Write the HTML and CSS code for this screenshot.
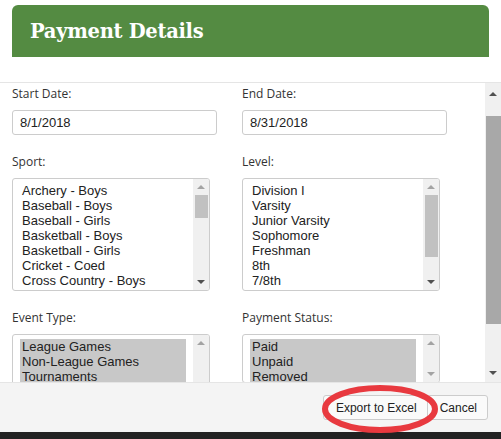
FILE: index.html
```html
<!DOCTYPE html>
<html lang="en">
<head>
  <meta charset="UTF-8">
  <meta name="viewport" content="width=device-width, initial-scale=1.0">
  <title>Payment Details</title>
  <link rel="stylesheet" href="styles.css">
</head>
<body>
  <div class="modal-header">
    <h1>Payment Details</h1>
  </div>

  <div class="modal-body">
    <div class="form-area">
      <div class="form-grid">
        <div class="field">
          <label>Start Date:</label>
          <div class="input-box">8/1/2018</div>
        </div>
        <div class="field">
          <label>End Date:</label>
          <div class="input-box">8/31/2018</div>
        </div>

        <div class="field">
          <label>Sport:</label>
          <div class="listbox">
            <ul>
              <li>Archery - Boys</li>
              <li>Baseball - Boys</li>
              <li>Baseball - Girls</li>
              <li>Basketball - Boys</li>
              <li>Basketball - Girls</li>
              <li>Cricket - Coed</li>
              <li>Cross Country - Boys</li>
              <li>Cross Country - Girls</li>
            </ul>
            <div class="mini-scroll">
              <span class="arrow up"></span>
              <span class="thumb thumb-sport"></span>
              <span class="arrow down dark"></span>
            </div>
          </div>
        </div>
        <div class="field">
          <label>Level:</label>
          <div class="listbox">
            <ul>
              <li>Division I</li>
              <li>Varsity</li>
              <li>Junior Varsity</li>
              <li>Sophomore</li>
              <li>Freshman</li>
              <li>8th</li>
              <li>7/8th</li>
              <li>6/7/8th</li>
            </ul>
            <div class="mini-scroll">
              <span class="arrow up"></span>
              <span class="thumb thumb-level"></span>
              <span class="arrow down dark"></span>
            </div>
          </div>
        </div>

        <div class="field">
          <label>Event Type:</label>
          <div class="listbox tall">
            <ul>
              <li class="selected">League Games</li>
              <li class="selected">Non-League Games</li>
              <li class="selected">Tournaments</li>
              <li class="selected">Scrimmages</li>
            </ul>
            <div class="mini-scroll">
              <span class="arrow up"></span>
            </div>
          </div>
        </div>
        <div class="field">
          <label>Payment Status:</label>
          <div class="listbox short">
            <ul>
              <li class="selected">Paid</li>
              <li class="selected">Unpaid</li>
              <li class="selected">Removed</li>
            </ul>
            <div class="mini-scroll">
              <span class="arrow up"></span>
              <span class="arrow down"></span>
            </div>
          </div>
        </div>
      </div>
    </div>

    <div class="page-scroll">
      <span class="arrow up dark"></span>
      <span class="page-thumb"></span>
      <span class="arrow down dark"></span>
    </div>
  </div>

  <div class="modal-footer">
    <button class="btn">Export to Excel</button>
    <button class="btn">Cancel</button>
    <svg class="circle-mark" width="130" height="56" viewBox="0 0 130 56">
      <ellipse cx="65" cy="28" rx="55" ry="21" fill="none" stroke="#e8393f" stroke-width="6"/>
    </svg>
  </div>

  <div class="backdrop"></div>
</body>
</html>
```

FILE: styles.css
```css
body {
  margin: 0;
  background: #fff;
  font-family: 'Open Sans', Arial, sans-serif;
  color: #333;
  overflow: hidden;
}

.modal-header {
  margin: 5px 12px 0;
  height: 52px;
  background-color: #548b42;
  border-radius: 6px 6px 0 0;
  display: flex;
  align-items: center;
  padding-left: 18px;
}

.modal-header h1 {
  margin: 0;
  font-family: 'DejaVu Serif', serif;
  font-size: 19.5px;
  font-weight: bold;
  letter-spacing: -0.3px;
  color: #fff;
}

.modal-body {
  margin-top: 25px;
  height: 299px;
  border-top: 1px solid #e5e5e5;
  display: flex;
  overflow: hidden;
}

.form-area {
  flex: 1;
  padding: 2px 0 0 12px;
  overflow: hidden;
}

.form-grid {
  display: grid;
  grid-template-columns: 205px 205px;
  column-gap: 25px;
  row-gap: 18px;
}

.field label {
  display: block;
  font-size: 12px;
  line-height: 18px;
  margin-bottom: 7px;
  color: #333;
}

.input-box {
  height: 23px;
  border: 1px solid #ccc;
  border-radius: 3px;
  padding-left: 7px;
  font-family: 'Liberation Sans', Arial, sans-serif;
  font-size: 13px;
  line-height: 23px;
  color: #222;
}

.listbox {
  width: 196px;
  height: 111px;
  border: 1px solid #ccc;
  border-radius: 3px;
  display: flex;
  overflow: hidden;
}

.listbox.tall {
  height: 140px;
}

.listbox.short {
  height: 47px;
}

.listbox ul {
  flex: 1;
  margin: 0;
  padding: 4px 0 0 7px;
  list-style: none;
  font-family: 'Liberation Sans', Arial, sans-serif;
  font-size: 13px;
  line-height: 15px;
  color: #222;
}

.listbox li {
  padding-left: 2px;
  margin-right: 7px;
}

.listbox li.selected {
  background: #c8c8c8;
}

.mini-scroll {
  width: 16px;
  background: #f0f0f0;
  display: flex;
  flex-direction: column;
  align-items: center;
}

.arrow {
  width: 0;
  height: 0;
  border-left: 4px solid transparent;
  border-right: 4px solid transparent;
}

.arrow.up {
  border-bottom: 4px solid #a3a3a3;
  margin-top: 6px;
}

.arrow.down {
  border-top: 4px solid #a3a3a3;
  margin-top: auto;
  margin-bottom: 6px;
}

.arrow.up.dark {
  border-bottom-color: #505050;
}

.arrow.down.dark {
  border-top-color: #505050;
}

.thumb {
  width: 13px;
  background: #c1c1c1;
  margin-top: 6px;
}

.thumb-sport {
  height: 23px;
}

.thumb-level {
  height: 62px;
}

.page-scroll {
  width: 16px;
  background: #f0f0f0;
  display: flex;
  flex-direction: column;
  align-items: center;
}

.page-scroll .arrow.up {
  margin-top: 9px;
}

.page-scroll .arrow.down {
  margin-bottom: 7px;
}

.page-thumb {
  width: 15px;
  height: 208px;
  margin-top: 20px;
  margin-left: 1px;
  background: #a8a8a8;
}

.modal-footer {
  height: 49px;
  border-top: 1px solid #e5e5e5;
  background: #f4f4f4;
  display: flex;
  justify-content: flex-end;
  align-items: center;
  padding-right: 13px;
  position: relative;
}

.btn {
  height: 25px;
  padding: 0 10px 0 12px;
  border: 1px solid #ccc;
  border-radius: 3px;
  background: #fafafa;
  font-family: 'Liberation Sans', Arial, sans-serif;
  font-size: 12px;
  color: #222;
  margin-left: -1px;
}

.circle-mark {
  position: absolute;
  left: 315px;
  top: -2px;
}

.backdrop {
  height: 20px;
  background: #222;
}
```
